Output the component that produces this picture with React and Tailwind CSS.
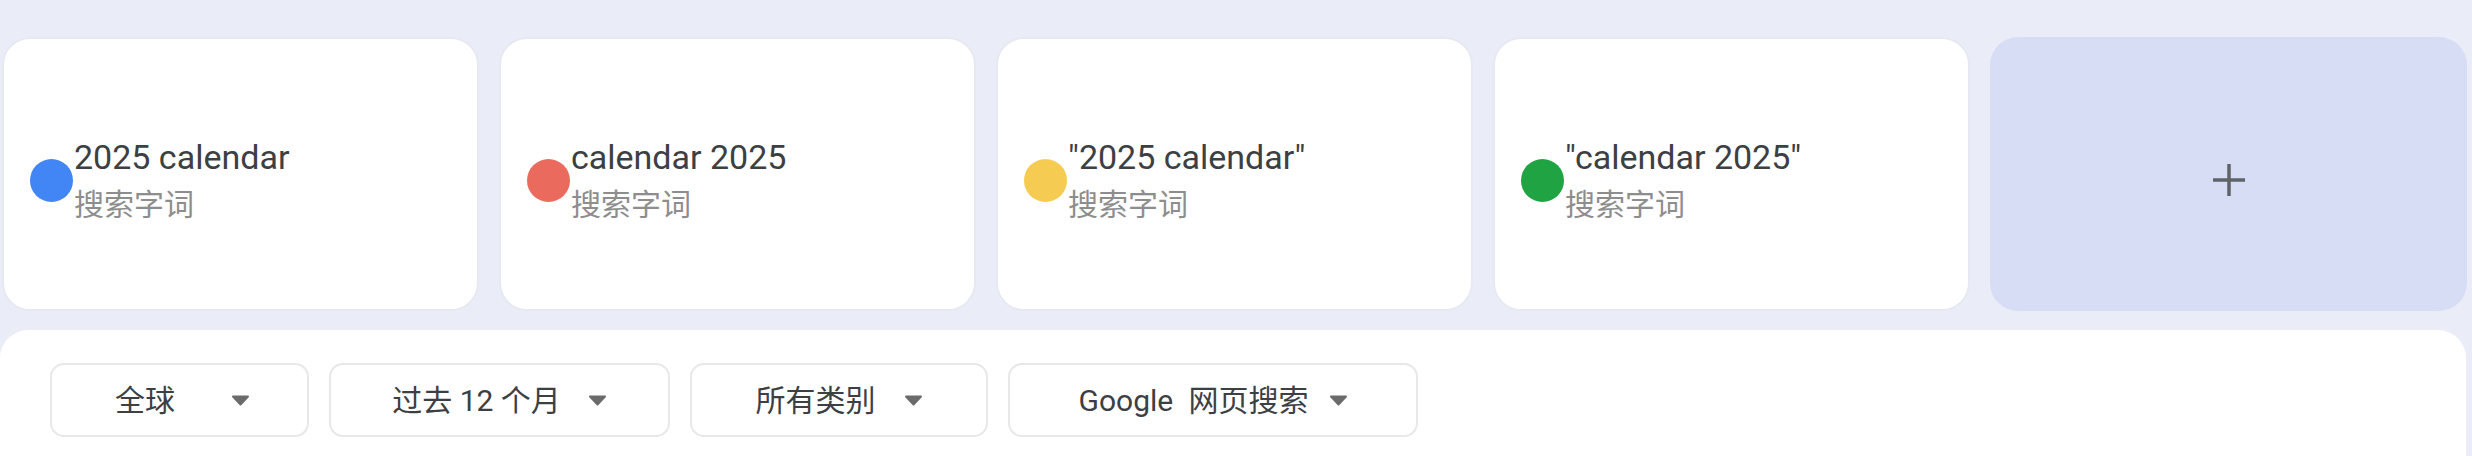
import React from "react";

const terms = [
	{ label: "2025 calendar", dot: "bg-[#4285f4]" },
	{ label: "calendar 2025", dot: "bg-[#ea6b5e]" },
	{ label: '"2025 calendar"', dot: "bg-[#f6cb52]" },
	{ label: '"calendar 2025"', dot: "bg-[#1fa343]" },
];

const filters = [
	{ label: "全球", width: "w-[259px] pl-[6px]", gap: "gap-[56px]" },
	{ label: "过去 12 个月", width: "w-[341px]", gap: "gap-[27px]" },
	{ label: "所有类别", width: "w-[298px]", gap: "gap-[28px]" },
	{ label: "Google\u2002网页搜索", width: "w-[410px]", gap: "gap-[20px]" },
];

const Caret = () => (
	<svg width="19" height="11" viewBox="0 0 19 11" className="shrink-0">
		<path d="M2 1.5 H17 L9.5 9.5 Z" fill="#6b6b6b" stroke="#6b6b6b" strokeWidth="2" strokeLinejoin="round" />
	</svg>
);

const TermCard = ({ term }) => (
	<div className="w-[477px] shrink-0 h-[274px] bg-white rounded-[28px] border-2 border-[#e6e9f1] flex items-center pl-[26px] pt-[12px]">
		<div className={`w-[43px] h-[43px] rounded-full shrink-0 ${term.dot}`} />
		<div className="ml-[1px] flex flex-col">
			<span className="text-[34px] leading-[44px] text-[#3c4043] font-['Roboto','Noto_Sans_CJK_SC',sans-serif]">
				{term.label}
			</span>
			<span className="mt-[6px] text-[30px] leading-[40px] text-[#8d8d8d] font-['Roboto','Noto_Sans_CJK_SC',sans-serif]">
				搜索字词
			</span>
		</div>
	</div>
);

export default function App() {
	return (
		<div className="w-[2472px] h-[456px] bg-[#eaedf7] overflow-hidden">
			{/* Search term cards */}
			<div className="flex gap-5 pl-[2px] pt-[37px]">
				{terms.map((term) => (
					<TermCard key={term.label} term={term} />
				))}
				<div className="w-[477px] shrink-0 h-[274px] bg-[#d7ddf4] rounded-[28px] flex items-center justify-center pt-[12px]">
					<svg width="34" height="34" viewBox="0 0 34 34">
						<path d="M17 1 V33 M1 17 H33" stroke="#5f6368" strokeWidth="3.5" />
					</svg>
				</div>
			</div>

			{/* Filter bar */}
			<div className="mt-[19px] mr-[6px] h-[140px] bg-white rounded-t-[28px] flex gap-5 pl-[50px] pt-[33px]">
				{filters.map((f) => (
					<div
						key={f.label}
						className={`${f.width} h-[74px] border-2 border-[#e8e8e8] rounded-[14px] flex items-center justify-center ${f.gap}`}
					>
						<span className="text-[30px] text-[#3c4043] font-['Roboto','Noto_Sans_CJK_SC',sans-serif]">
							{f.label}
						</span>
						<Caret />
					</div>
				))}
			</div>
		</div>
	);
}
